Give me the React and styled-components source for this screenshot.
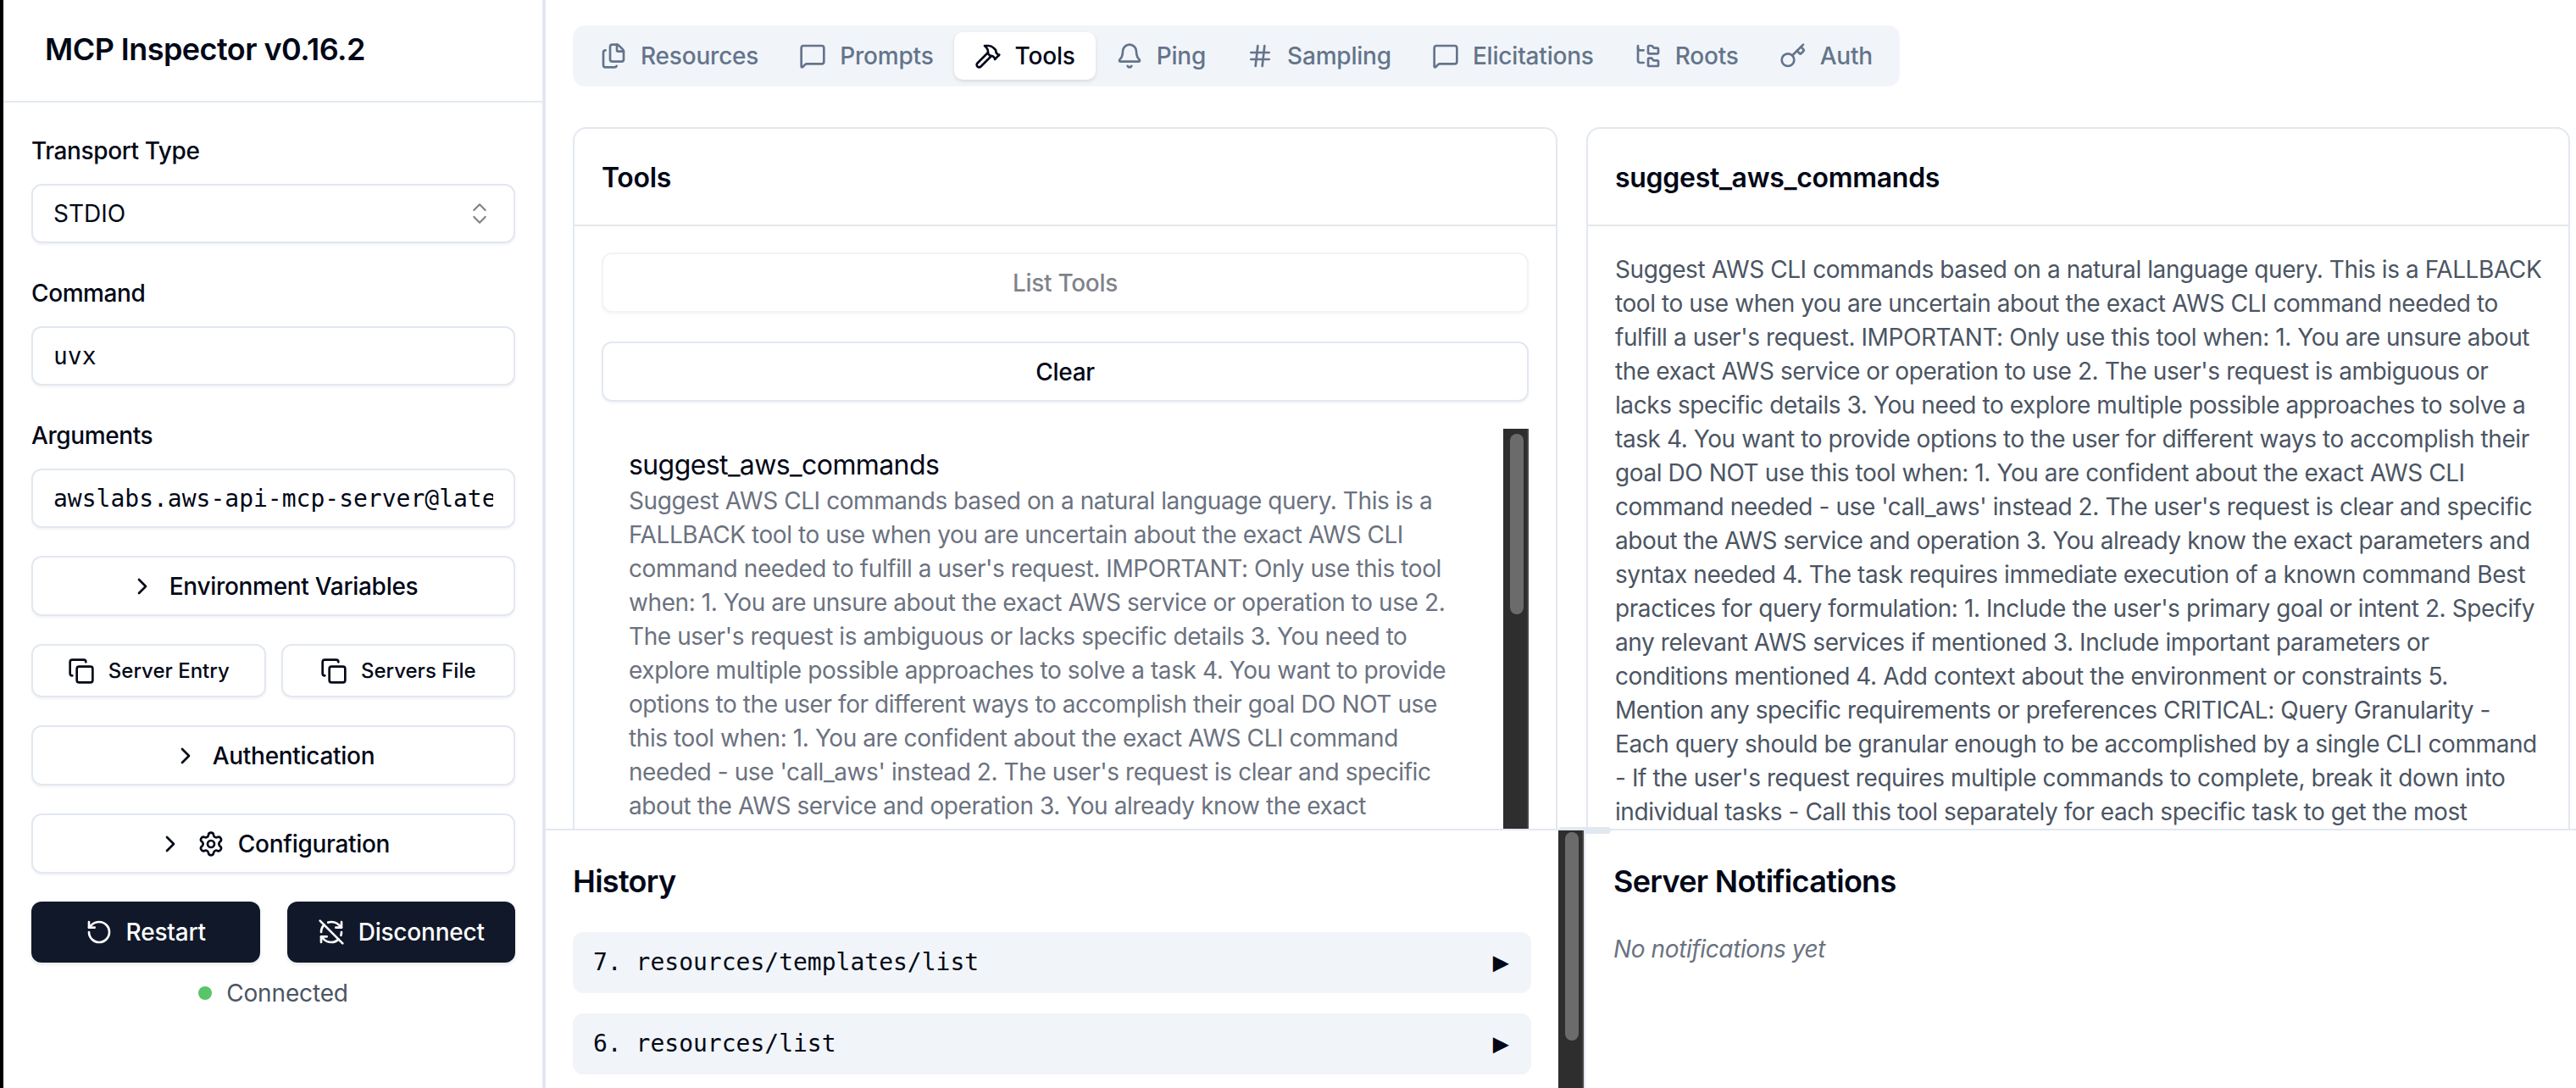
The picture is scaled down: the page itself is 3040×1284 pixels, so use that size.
import React from 'react';
import styled, { createGlobalStyle } from 'styled-components';
import {
  Bell,
  ChevronRight,
  ChevronsUpDown,
  Copy,
  Files,
  FolderTree,
  Hammer,
  Hash,
  Key,
  MessageSquare,
  RefreshCwOff,
  RotateCcw,
  Settings,
} from 'lucide-react';

const DESCRIPTION = "Suggest AWS CLI commands based on a natural language query. This is a FALLBACK tool to use when you are uncertain about the exact AWS CLI command needed to fulfill a user's request. IMPORTANT: Only use this tool when: 1. You are unsure about the exact AWS service or operation to use 2. The user's request is ambiguous or lacks specific details 3. You need to explore multiple possible approaches to solve a task 4. You want to provide options to the user for different ways to accomplish their goal DO NOT use this tool when: 1. You are confident about the exact AWS CLI command needed - use 'call_aws' instead 2. The user's request is clear and specific about the AWS service and operation 3. You already know the exact parameters and syntax needed 4. The task requires immediate execution of a known command Best practices for query formulation: 1. Include the user's primary goal or intent 2. Specify any relevant AWS services if mentioned 3. Include important parameters or conditions mentioned 4. Add context about the environment or constraints 5. Mention any specific requirements or preferences CRITICAL: Query Granularity - Each query should be granular enough to be accomplished by a single CLI command - If the user's request requires multiple commands to complete, break it down into individual tasks - Call this tool separately for each specific task to get the most";

const TABS = [
  { name: 'Resources', icon: Files },
  { name: 'Prompts', icon: MessageSquare },
  { name: 'Tools', icon: Hammer, active: true },
  { name: 'Ping', icon: Bell },
  { name: 'Sampling', icon: Hash },
  { name: 'Elicitations', icon: MessageSquare },
  { name: 'Roots', icon: FolderTree },
  { name: 'Auth', icon: Key },
];

const HISTORY = ['7. resources/templates/list', '6. resources/list'];

const Sidebar = () => (
  <Side>
    <SideHeader>MCP Inspector v0.16.2</SideHeader>
    <SideBody>
      <Fields>
        <Field>
          <Label>Transport Type</Label>
          <Select>
            STDIO
            <SelectIcon><ChevronsUpDown size={32} strokeWidth={1.6} /></SelectIcon>
          </Select>
        </Field>
        <Field>
          <Label>Command</Label>
          <MonoInput readOnly value="uvx" />
        </Field>
        <Field>
          <Label>Arguments</Label>
          <MonoInput readOnly value="awslabs.aws-api-mcp-server@latest" />
        </Field>
      </Fields>
      <OutlineButton><ChevronRight size={32} />Environment Variables</OutlineButton>
      <ButtonRow>
        <SmallButton><Copy size={32} />Server Entry</SmallButton>
        <SmallButton><Copy size={32} />Servers File</SmallButton>
      </ButtonRow>
      <OutlineButton><ChevronRight size={32} />Authentication</OutlineButton>
      <OutlineButton><ChevronRight size={32} /><Settings size={32} />Configuration</OutlineButton>
      <ActionBlock>
        <ActionRow>
          <DarkButton><RotateCcw size={32} />Restart</DarkButton>
          <DarkButton><RefreshCwOff size={32} />Disconnect</DarkButton>
        </ActionRow>
        <Status><StatusDot />Connected</Status>
      </ActionBlock>
    </SideBody>
  </Side>
);

const ToolsPanel = () => (
  <Card>
    <CardHeader>Tools</CardHeader>
    <CardBody>
      <OutlineButton $muted>List Tools</OutlineButton>
      <OutlineButton>Clear</OutlineButton>
      <ToolList>
        <ToolEntry>
          <ToolName>suggest_aws_commands</ToolName>
          <ToolDescription>{DESCRIPTION}</ToolDescription>
        </ToolEntry>
        <Track $height={472}>
          <Thumb $top={6} $height={213} />
        </Track>
      </ToolList>
    </CardBody>
  </Card>
);

const DetailPanel = () => (
  <Card>
    <CardHeader>suggest_aws_commands</CardHeader>
    <DetailText>{DESCRIPTION}</DetailText>
  </Card>
);

const App = () => (
  <>
    <GlobalStyle />
    <Page>
      <Sidebar />
      <Main>
        <TopArea>
          <TabList>
            {TABS.map((tab) => {
              const Icon = tab.icon;
              return (
                <Tab key={tab.name} $active={tab.active}>
                  <Icon size={32} />
                  {tab.name}
                </Tab>
              );
            })}
          </TabList>
          <CardGrid>
            <ToolsPanel />
            <DetailPanel />
          </CardGrid>
        </TopArea>
        <BottomArea>
          <ResizeHandle />
          <History>
            <PanelTitle>History</PanelTitle>
            <HistoryRows>
              {HISTORY.map((entry) => (
                <HistoryRow key={entry}>
                  {entry}
                  <RowArrow>▶</RowArrow>
                </HistoryRow>
              ))}
            </HistoryRows>
          </History>
          <Track>
            <Thumb $top={2} $height={246} />
          </Track>
          <Notifications>
            <PanelTitle>Server Notifications</PanelTitle>
            <EmptyNote>No notifications yet</EmptyNote>
          </Notifications>
        </BottomArea>
      </Main>
    </Page>
  </>
);

export default App;

// Styling
const GlobalStyle = createGlobalStyle`
  * {
    box-sizing: border-box;
  }

  html, body {
    margin: 0;
    background: #fff;
  }

  body {
    font-family: Inter, "Liberation Sans", sans-serif;
    font-size: 28px;
    line-height: 40px;
    color: #020817;
    -webkit-font-smoothing: antialiased;
  }
`;

const Page = styled.div`
  display: flex;
  width: 3040px;
  height: 1284px;
  border-left: 4px solid #000;
  overflow: hidden;
`;

const Side = styled.aside`
  flex: none;
  width: 640px;
  border-right: 4px solid #e2e8f0;
`;

const SideHeader = styled.div`
  height: 121px;
  padding: 34px 0 0 49px;
  border-bottom: 2px solid #e2e8f0;
  font-size: 36px;
  line-height: 48px;
  font-weight: 600;
  letter-spacing: -0.55px;
`;

const SideBody = styled.div`
  display: flex;
  flex-direction: column;
  gap: 33px;
  padding: 37px 32px 0 33px;
`;

const Fields = styled.div`
  display: flex;
  flex-direction: column;
  gap: 39px;
`;

const Field = styled.div`
  display: flex;
  flex-direction: column;
  gap: 19px;
`;

const Label = styled.label`
  font-weight: 500;
  letter-spacing: -0.4px;
`;

const Select = styled.div`
  display: flex;
  align-items: center;
  justify-content: space-between;
  height: 70px;
  padding: 0 24px;
  border: 2px solid #e2e8f0;
  border-radius: 12px;
  box-shadow: 0 2px 3px rgba(15, 23, 42, 0.05);
`;

const SelectIcon = styled.span`
  display: flex;
  opacity: 0.5;
`;

const MonoInput = styled.input`
  height: 70px;
  width: 100%;
  padding: 0 24px;
  border: 2px solid #e2e8f0;
  border-radius: 12px;
  box-shadow: 0 2px 3px rgba(15, 23, 42, 0.05);
  outline: none;
  background: #fff;
  color: #020817;
  font-family: "DejaVu Sans Mono", "Liberation Mono", monospace;
  font-size: 28px;
`;

const OutlineButton = styled.div`
  display: flex;
  align-items: center;
  justify-content: center;
  gap: 16px;
  height: 71px;
  flex: none;
  border: 2px solid #e2e8f0;
  border-radius: 12px;
  box-shadow: 0 2px 3px rgba(15, 23, 42, 0.05);
  font-weight: 500;
  letter-spacing: -0.3px;
  opacity: ${(props) => (props.$muted ? 0.5 : 1)};
`;

const ButtonRow = styled.div`
  display: flex;
  gap: 18px;
`;

const SmallButton = styled(OutlineButton)`
  flex: 1;
  height: 63px;
  font-size: 24px;
  letter-spacing: 0;
`;

const ActionBlock = styled.div`
  display: flex;
  flex-direction: column;
  gap: 16px;
`;

const ActionRow = styled.div`
  display: flex;
  gap: 32px;
`;

const DarkButton = styled.div`
  flex: 1;
  display: flex;
  align-items: center;
  justify-content: center;
  gap: 16px;
  height: 72px;
  border-radius: 12px;
  background: #111829;
  color: #fff;
  font-weight: 500;
  letter-spacing: -0.2px;
  box-shadow: 0 2px 4px rgba(15, 23, 42, 0.12);
`;

const Status = styled.div`
  display: flex;
  align-items: center;
  justify-content: center;
  gap: 17px;
  color: #4b5563;
  letter-spacing: -0.15px;
`;

const StatusDot = styled.span`
  width: 16px;
  height: 16px;
  border-radius: 50%;
  background: #5ac46a;
`;

const Main = styled.main`
  flex: 1;
  min-width: 0;
  display: flex;
  flex-direction: column;
`;

const TopArea = styled.div`
  flex: none;
  height: 978px;
  padding: 30px 7px 0 32px;
  overflow: hidden;
`;

const TabList = styled.div`
  display: inline-flex;
  height: 72px;
  padding: 8px;
  border-radius: 14px;
  background: #f1f5f9;
`;

const Tab = styled.div`
  display: flex;
  align-items: center;
  gap: 16px;
  padding: 0 24px;
  border-radius: 10px;
  font-weight: 500;
  letter-spacing: -0.2px;
  color: ${(props) => (props.$active ? '#020817' : '#64748b')};
  background: ${(props) => (props.$active ? '#fff' : 'transparent')};
  box-shadow: ${(props) => (props.$active ? '0 2px 4px rgba(15, 23, 42, 0.12)' : 'none')};
`;

const CardGrid = styled.div`
  display: grid;
  grid-template-columns: 1162px 1161px;
  gap: 34px;
  margin-top: 48px;
`;

const Card = styled.section`
  height: 900px;
  border: 2px solid #e2e8f0;
  border-radius: 16px;
  background: #fff;
`;

const CardHeader = styled.h3`
  margin: 0;
  height: 115px;
  padding: 38px 32px 0;
  border-bottom: 2px solid #e5e7eb;
  font-size: 32px;
  line-height: 40px;
  font-weight: 600;
  letter-spacing: -0.3px;
`;

const CardBody = styled.div`
  display: flex;
  flex-direction: column;
  gap: 34px;
  padding: 31px 32px 0;
`;

const ToolList = styled.div`
  display: flex;
  margin-top: -2px;
  height: 600px;
`;

const ToolEntry = styled.div`
  flex: 1;
  min-width: 0;
  padding: 20px 32px 0;
`;

const ToolName = styled.div`
  font-size: 32px;
  line-height: 45px;
  letter-spacing: -0.6px;
`;

const ToolDescription = styled.div`
  color: #6b7280;
  letter-spacing: -0.42px;
`;

const Track = styled.div`
  position: relative;
  flex: none;
  width: 30px;
  height: ${(props) => (props.$height ? `${props.$height}px` : 'auto')};
  background: #2e2e2e;
  border-right: 2px solid #454545;
`;

const Thumb = styled.div`
  position: absolute;
  left: 8px;
  top: ${(props) => props.$top}px;
  width: 16px;
  height: ${(props) => props.$height}px;
  border-radius: 8px;
  background: #6b6b6b;
`;

const DetailText = styled.div`
  padding: 31px 30.5px 0 32px;
  color: #4b5563;
  letter-spacing: -0.42px;
`;

const BottomArea = styled.div`
  position: relative;
  flex: 1;
  min-height: 0;
  display: flex;
  border-top: 2px solid #e2e8f0;
`;

const ResizeHandle = styled.div`
  position: absolute;
  left: 1195px;
  top: -4px;
  width: 62px;
  height: 8px;
  border-radius: 4px;
  background: #e2e8f0;
`;

const History = styled.div`
  flex: none;
  width: 1195px;
  padding: 32px 32px 0;
`;

const PanelTitle = styled.h3`
  margin: 0;
  font-size: 36px;
  line-height: 56px;
  font-weight: 600;
  letter-spacing: -0.7px;
`;

const HistoryRows = styled.div`
  display: flex;
  flex-direction: column;
  gap: 24px;
  margin-top: 32px;
`;

const HistoryRow = styled.div`
  display: flex;
  align-items: center;
  justify-content: space-between;
  height: 72px;
  padding: 0 26px 0 24px;
  border-radius: 12px;
  background: #f1f5f9;
  font-family: "DejaVu Sans Mono", "Liberation Mono", monospace;
`;

const RowArrow = styled.span`
  margin-top: -3px;
  font-size: 32px;
`;

const Notifications = styled.div`
  flex: 1;
  min-width: 0;
  padding: 32px 33px 0;
  border-left: 2px solid #e2e8f0;
`;

const EmptyNote = styled.div`
  margin-top: 32px;
  font-style: italic;
  color: #6b7280;
  letter-spacing: -0.4px;
`;
